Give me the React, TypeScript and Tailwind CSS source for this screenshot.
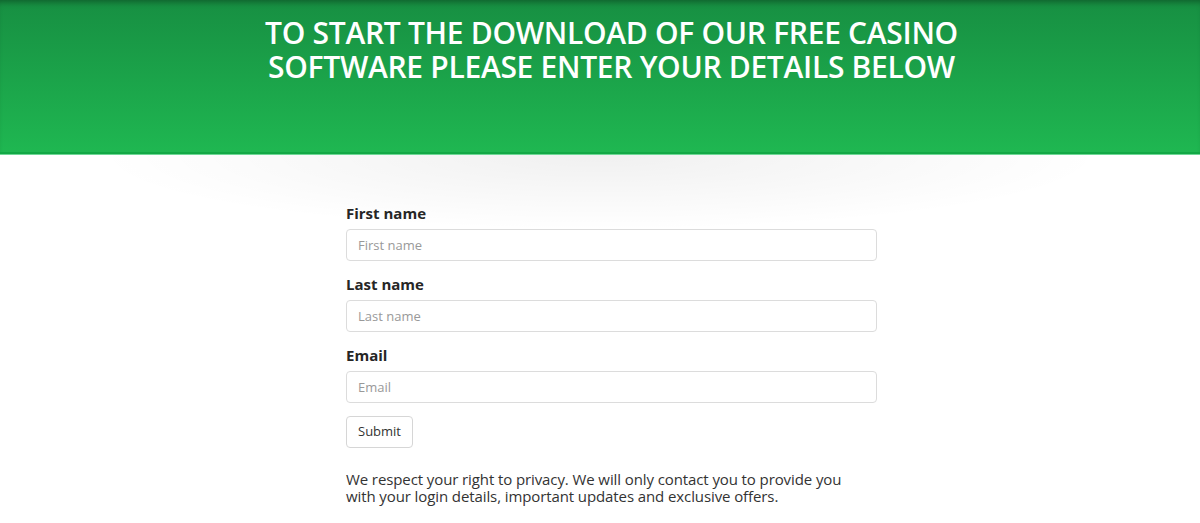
import React from "react";

export default function App() {
  const font = { fontFamily: '"Open Sans", sans-serif' };
  return (
    <div className="min-h-[523px] bg-white" style={font}>
      <header className="relative h-[154px] bg-gradient-to-b from-[#178f42] to-[#1fb751] shadow-[inset_0_6px_6px_-4px_rgba(0,0,0,0.35)] border-b-2 border-[#13a845]">
        <div className="mx-auto w-[740px] pl-[23px]">
          <h1 className="pt-[16px] text-center text-[30px] leading-[34px] font-semibold uppercase text-white tracking-[-0.3px]">
            <span className="block">To start the download of our free casino</span>
            <span className="block">software please enter your details below</span>
          </h1>
        </div>
      </header>
      <div className="h-[1px] bg-[#6fd796]" />
      <main className="relative">
        <div className="pointer-events-none absolute left-0 right-0 top-0 h-[75px] bg-[radial-gradient(ellipse_42%_100%_at_50%_0%,rgba(0,0,0,0.06),rgba(0,0,0,0))]" />
        <div className="relative mx-auto w-[554px] pl-[23px]">
          <form className="w-[531px] pt-[48px] text-[#333]" onSubmit={(e) => e.preventDefault()}>
            {[
              ["First name", "First name"],
              ["Last name", "Last name"],
              ["Email", "Email"],
            ].map(([label, ph]) => (
              <div key={label} className="mb-[13px]">
                <label className="block text-[15px] leading-[20px] font-bold text-[#262626] mb-[6px]">{label}</label>
                <input
                  placeholder={ph}
                  className="block h-[32px] w-full rounded-[4px] border border-[#dcdcdc] px-[11px] text-[13px] text-[#555] placeholder:text-[#999] outline-none"
                  style={font}
                />
              </div>
            ))}
            <button
              type="submit"
              className="h-[32px] rounded-[4px] border border-[#d6d6d6] bg-white px-[11px] text-[13px] text-[#333]"
              style={font}
            >
              Submit
            </button>
            <p className="mt-[23px] w-[515px] text-[15px] leading-[17px] tracking-[-0.1px] text-[#333]">
              We respect your right to privacy. We will only contact you to provide you with your login details, important updates and exclusive offers.
            </p>
          </form>
        </div>
      </main>
    </div>
  );
}
